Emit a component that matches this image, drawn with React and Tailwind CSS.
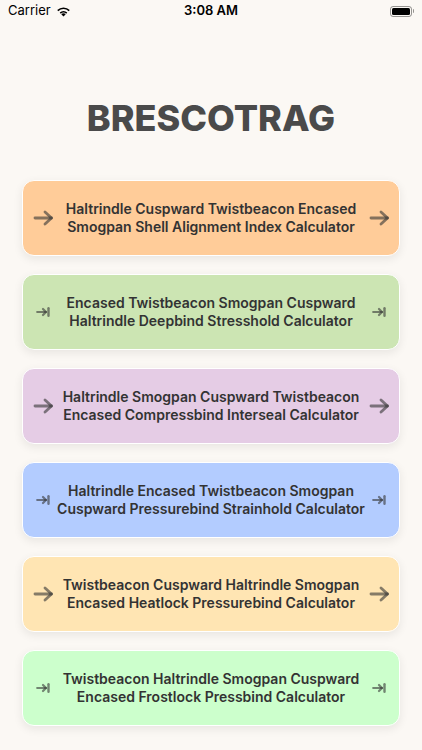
import React from "react";

const cards = [
  { bg: "bg-[#ffcc99]", icon: "arrow", lines: ["Haltrindle Cuspward Twistbeacon Encased", "Smogpan Shell Alignment Index Calculator"] },
  { bg: "bg-[#cce5b3]", icon: "tab", lines: ["Encased Twistbeacon Smogpan Cuspward", "Haltrindle Deepbind Stresshold Calculator"] },
  { bg: "bg-[#e5cce5]", icon: "arrow", lines: ["Haltrindle Smogpan Cuspward Twistbeacon", "Encased Compressbind Interseal Calculator"] },
  { bg: "bg-[#b3ccff]", icon: "tab", lines: ["Haltrindle Encased Twistbeacon Smogpan", "Cuspward Pressurebind Strainhold Calculator"] },
  { bg: "bg-[#ffe5b3]", icon: "arrow", lines: ["Twistbeacon Cuspward Haltrindle Smogpan", "Encased Heatlock Pressurebind Calculator"] },
  { bg: "bg-[#ccffcc]", icon: "tab", lines: ["Twistbeacon Haltrindle Smogpan Cuspward", "Encased Frostlock Pressbind Calculator"] },
];

const Icon = ({ type }) => (
  <div className="flex w-[24px] justify-center text-[#333]/60">
    {type === "arrow" ? (
      <svg width="21" height="16" viewBox="0 0 21 16" fill="none" stroke="currentColor" strokeWidth="2.8" strokeLinecap="round" strokeLinejoin="round">
        <path d="M2 8 H18.5" />
        <path d="M12 2 L18.5 8 L12 14" />
      </svg>
    ) : (
      <svg width="14" height="10" viewBox="0 0 14 10" fill="none" stroke="currentColor" strokeWidth="2.2" strokeLinecap="round" strokeLinejoin="round">
        <path d="M1.2 5 H10" />
        <path d="M7 2 L10 5 L7 8" />
        <path d="M12.5 1.2 V8.8" strokeWidth="2.4" />
      </svg>
    )}
  </div>
);

const StatusBar = () => (
  <div className="relative flex h-[22px] items-center px-[8px] text-[13px] text-black">
    <div className="flex items-center gap-[5px]">
      <span>Carrier</span>
      <svg width="15" height="11" viewBox="0 0 15 11">
        <path d="M7.5 10.5 L5.3 8.2 A3.2 3.2 0 0 1 9.7 8.2 Z" fill="black" />
        <path d="M3.7 6.6 A5.4 5.4 0 0 1 11.3 6.6 L10.2 7.7 A3.9 3.9 0 0 0 4.8 7.7 Z" fill="black" />
        <path d="M1.2 4.1 A9 9 0 0 1 13.8 4.1 L12.7 5.2 A7.5 7.5 0 0 0 2.3 5.2 Z" fill="black" />
      </svg>
    </div>
    <span className="absolute left-1/2 -translate-x-1/2 font-semibold">3:08 AM</span>
    <div className="ml-auto flex items-center">
      <div className="h-[11px] w-[22px] rounded-[3px] border border-black/40 p-[1px]">
        <div className="h-full w-full rounded-[1.5px] bg-black" />
      </div>
      <div className="ml-[1px] h-[4px] w-[1.5px] rounded-r bg-black/40" />
    </div>
  </div>
);

export default function App() {
  return (
    <div className="min-h-[750px] bg-[#fbf8f4] font-['Inter','Liberation_Sans',sans-serif]">
      <StatusBar />
      <h1 className="mt-[70px] text-center text-[36px] font-extrabold leading-[52px] text-[#4a4a4a]">
        BRESCOTRAG
      </h1>
      <div className="mt-[36px] flex flex-col gap-[18px] px-[22px]">
        {cards.map((c, i) => (
          <div
            key={i}
            className={`flex h-[76px] items-center rounded-[12px] border-[1.5px] border-white px-[8px] shadow-[0_3px_10px_rgba(0,0,0,0.08)] ${c.bg}`}
          >
            <Icon type={c.icon} />
            <div className="min-w-0 flex-1 text-center text-[14px] font-semibold leading-[18px] text-[#333]">
              {c.lines.map((l) => (
                <div key={l} className="whitespace-nowrap">{l}</div>
              ))}
            </div>
            <Icon type={c.icon} />
          </div>
        ))}
      </div>
    </div>
  );
}
